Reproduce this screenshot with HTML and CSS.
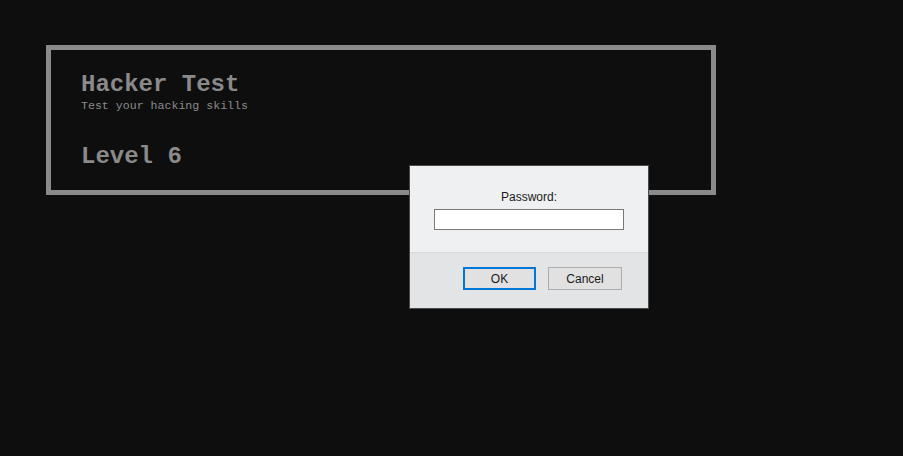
FILE: index.html
```html
<!DOCTYPE html>
<html>
<head>
<meta charset="utf-8">
<link rel="stylesheet" href="styles.css">
</head>
<body>
<div class="panel">
  <h1 class="title">Hacker Test</h1>
  <p class="subtitle">Test your hacking skills</p>
  <h2 class="level">Level 6</h2>
</div>
<div class="dialog">
  <div class="dialog-top">
    <label class="dialog-label">Password:</label>
    <div class="dialog-input"></div>
  </div>
  <div class="dialog-bottom">
    <button class="btn btn-ok">OK</button>
    <button class="btn btn-cancel">Cancel</button>
  </div>
</div>
</body>
</html>
```

FILE: styles.css
```css
html, body {
  margin: 0;
  padding: 0;
  background: #0e0e0e;
  width: 903px;
  height: 456px;
  overflow: hidden;
}
body {
  padding: 45px 0 0 46px;
  box-sizing: border-box;
  font-family: "Liberation Mono", "Courier New", monospace;
  color: #8a8a8a;
}
.panel {
  width: 670px;
  height: 150px;
  box-sizing: border-box;
  border: 5px solid #8a8a8a;
  padding: 22px 0 0 30px;
}
.title {
  margin: 0;
  font-size: 24px;
  font-weight: bold;
  line-height: 26px;
}
.subtitle {
  margin: 1px 0 0 0;
  font-size: 11.6px;
  line-height: 13px;
}
.level {
  margin: 32px 0 0 0;
  font-size: 24px;
  font-weight: bold;
  line-height: 26px;
}
.dialog {
  position: absolute;
  left: 409px;
  top: 165px;
  width: 240px;
  height: 144px;
  box-sizing: border-box;
  border: 1px solid #4a4a4a;
  background: #e3e4e6;
  font-family: "Liberation Sans", Arial, sans-serif;
  font-size: 12px;
  color: #1a1a1a;
  display: flex;
  flex-direction: column;
}
.dialog-top {
  height: 87px;
  background: #eff0f2;
  border-bottom: 1px solid #d6d7d9;
  box-sizing: border-box;
  display: flex;
  flex-direction: column;
  align-items: center;
  padding-top: 24px;
}
.dialog-label {
  line-height: 14px;
}
.dialog-input {
  margin-top: 5px;
  width: 190px;
  height: 21px;
  box-sizing: border-box;
  border: 1px solid #7a7a7a;
  background: #ffffff;
}
.dialog-bottom {
  display: flex;
  justify-content: flex-end;
  gap: 12px;
  padding: 14px 26px 0 0;
}
.btn {
  height: 23px;
  box-sizing: border-box;
  font-family: "Liberation Sans", Arial, sans-serif;
  font-size: 12px;
  color: #1a1a1a;
  background: #e1e1e1;
  padding: 0;
  margin: 0;
}
.btn-ok {
  width: 73px;
  border: 2px solid #0078d7;
}
.btn-cancel {
  width: 74px;
  border: 1px solid #adadad;
}
```
